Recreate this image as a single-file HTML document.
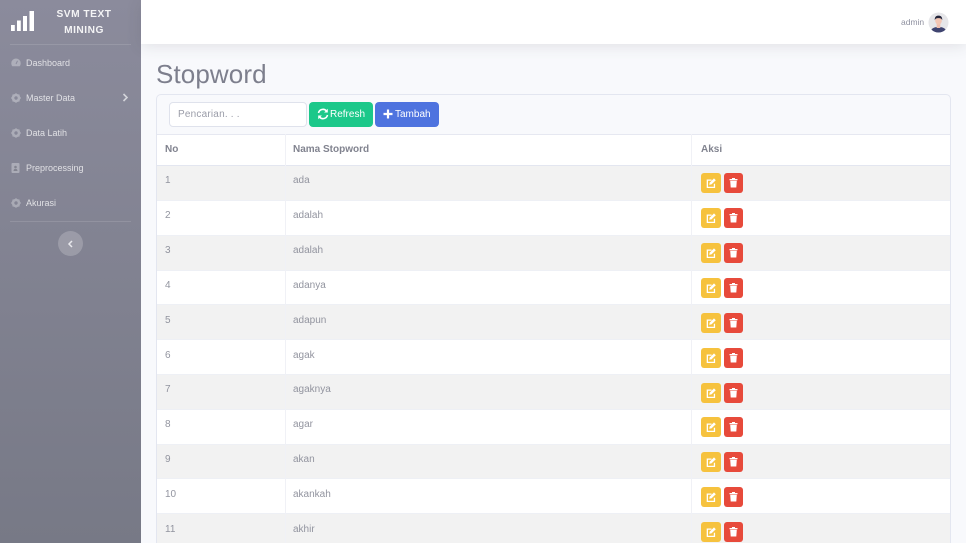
<!DOCTYPE html>
<html lang="id">
<head>
<meta charset="utf-8">
<title>Stopword</title>
<style>
*{box-sizing:border-box}
html,body{margin:0;padding:0;width:966px;height:543px;overflow:hidden;background:#f8f9fc;font-family:"Liberation Sans",sans-serif;color:#858796}
#wrap{position:relative;width:966px;height:543px;overflow:hidden;background:#f8f9fc}
.abs{position:absolute;white-space:nowrap}
#side{position:absolute;left:0;top:0;width:141px;height:543px;background:linear-gradient(180deg,#8b8b9c 0%,#777986 100%)}
#side .hr{position:absolute;left:10px;width:121px;height:1px;background:rgba(255,255,255,.12)}
#side .item{position:absolute;left:26px;font-size:9px;line-height:12px;color:rgba(255,255,255,.75);white-space:nowrap}
#side svg{position:absolute}
#brand{position:absolute;left:42px;width:84px;top:7px;text-align:center;color:rgba(255,255,255,.9);font-weight:bold;font-size:10.200px;line-height:15.500px;letter-spacing:.5px}
#top{position:absolute;left:141px;top:0;width:825px;height:44px;background:#fff;box-shadow:0 2px 14px rgba(58,59,69,.13)}
h1{position:absolute;left:156px;top:58px;margin:0;font-size:26px;line-height:32px;font-weight:400;color:#7d7f8d;letter-spacing:.1px}
#card{position:absolute;left:156px;top:94px;width:795px;height:449px;background:#f8f9fc;border:1px solid #e3e6f0;border-bottom:0;border-radius:5px 5px 0 0}
#search{position:absolute;left:169px;top:102px;width:138px;height:25px;background:#fff;border:1px solid #dfe2ec;border-radius:4px;font-size:10px;line-height:24px;padding-left:8px;color:#9a9ca8;letter-spacing:.2px}
.btn{position:absolute;top:102px;height:25px;border-radius:4px;color:#fff;font-size:10px;line-height:24px}
.btn span{top:.5px}
.row{position:absolute;left:157px;width:793px;border-bottom:1px solid #eef0f5}
.vl{position:absolute;top:134px;width:1px;height:409px;background:#f0f1f6}
.c{position:absolute;font-size:10px;line-height:12px;color:#92949f;white-space:nowrap}
.h{font-weight:bold;color:#81838f;font-size:10px;top:144px}
.b{position:absolute;width:20px;height:20px;border-radius:3px}
.b svg{position:absolute;left:0;top:0}
.e{left:701px;background:#f6c23e}
.d{left:724px;width:19px;background:#e74a3b}
</style>
</head>
<body>
<div id="wrap">
<div id="side">
  <svg style="left:10px;top:10px" width="26" height="23" viewBox="0 0 26 23">
    <rect x="1" y="15" width="3.800" height="6" fill="#fff"/>
    <rect x="7" y="10.500" width="3.800" height="10.500" fill="#fff"/>
    <rect x="13" y="6" width="4" height="15" fill="#fff"/>
    <rect x="19.500" y="1" width="4.500" height="20" fill="#fff"/>
  </svg>
  <div id="brand">SVM TEXT<br>MINING</div>
  <div class="hr" style="top:44px"></div>

  <svg style="left:11px;top:58px" width="10" height="9" viewBox="0 0 10 9"><path d="M5 .5A4.700 4.700 0 0 0 .3 5.200c0 1.200.4 2.300 1.100 3.100h7.200c.7-.8 1.100-1.900 1.100-3.100A4.700 4.700 0 0 0 5 .5z" fill="#aeafba"/><path d="M5 6 6.500 2.800" stroke="#8b8b9c" stroke-width="1"/></svg>
  <div class="item" style="top:57px">Dashboard</div>

  <svg style="left:11px;top:93px" width="10" height="10" viewBox="0 0 10 10"><circle cx="5" cy="5" r="3" fill="none" stroke="#aeafba" stroke-width="2.600"/><path d="M5 .2v2M5 7.800v2M.2 5h2M7.800 5h2M1.600 1.600 3 3M7 7l1.400 1.400M8.400 1.600 7 3M3 7 1.600 8.400" stroke="#aeafba" stroke-width="1.400"/></svg>
  <div class="item" style="top:92px">Master Data</div>
  <svg style="left:122px;top:93px" width="7" height="9" viewBox="0 0 7 9"><path d="M1.500 1 5 4.500 1.500 8" fill="none" stroke="#d3d4da" stroke-width="1.600"/></svg>

  <svg style="left:11px;top:128px" width="10" height="10" viewBox="0 0 10 10"><circle cx="5" cy="5" r="3" fill="none" stroke="#abacb7" stroke-width="2.600"/><path d="M5 .2v2M5 7.800v2M.2 5h2M7.800 5h2M1.600 1.600 3 3M7 7l1.400 1.400M8.400 1.600 7 3M3 7 1.600 8.400" stroke="#abacb7" stroke-width="1.400"/></svg>
  <div class="item" style="top:127px">Data Latih</div>

  <svg style="left:11px;top:163px" width="9" height="10" viewBox="0 0 9 10"><rect x=".5" width="8" height="10" rx="1" fill="#abacb7"/><circle cx="4.500" cy="4" r="1.300" fill="#82838f"/><path d="M2.500 8c0-1.500 1-2.200 2-2.200s2 .7 2 2.200z" fill="#82838f"/></svg>
  <div class="item" style="top:162px">Preprocessing</div>

  <svg style="left:11px;top:198px" width="10" height="10" viewBox="0 0 10 10"><circle cx="5" cy="5" r="3" fill="none" stroke="#a9aab5" stroke-width="2.600"/><path d="M5 .2v2M5 7.800v2M.2 5h2M7.800 5h2M1.600 1.600 3 3M7 7l1.400 1.400M8.400 1.600 7 3M3 7 1.600 8.400" stroke="#a9aab5" stroke-width="1.400"/></svg>
  <div class="item" style="top:197px">Akurasi</div>

  <div class="hr" style="top:221px"></div>
  <div style="position:absolute;left:58px;top:231px;width:25px;height:25px;border-radius:50%;background:rgba(255,255,255,.2)"></div>
  <svg style="left:67px;top:240px" width="7" height="8" viewBox="0 0 7 8"><path d="M5 1 2 4l3 3" fill="none" stroke="#e8e8ec" stroke-width="1.500"/></svg>
</div>

<div id="top"></div>
<div class="abs" style="left:901px;top:16px;font-size:8.500px;line-height:12px;color:#8f91a0">admin</div>
<svg style="position:absolute;left:928px;top:12px" width="21" height="21" viewBox="0 0 21 21">
  <defs><clipPath id="av"><circle cx="10.500" cy="10.500" r="10"/></clipPath></defs>
  <circle cx="10.500" cy="10.500" r="10" fill="#e6e6e9"/>
  <g clip-path="url(#av)">
    <path d="M2.500 21c.3-4.300 2.800-6 8-6s7.700 1.700 8 6z" fill="#3f4470"/>
    <rect x="8.700" y="11" width="3.600" height="5" fill="#f0bfae"/>
    <ellipse cx="10.500" cy="8.800" rx="3.300" ry="3.800" fill="#f3c6b4"/>
    <path d="M6.800 8.200C6.500 4.800 8.300 3.600 10.500 3.600s4 1.200 3.700 4.600c-.5-1.500-1.400-2.100-3.700-2.100s-3.200.6-3.700 2.100z" fill="#23253a"/>
  </g>
</svg>

<h1>Stopword</h1>
<div id="card"></div>
<div id="search">Pencarian. . .</div>

<div class="btn" style="left:309px;width:64px;background:#1cc88a">
  <svg style="position:absolute;left:8px;top:6px" width="12" height="12" viewBox="0 0 12 12"><path d="M1.500 5A4.600 4.600 0 0 1 9.500 3M10.500 7A4.600 4.600 0 0 1 2.500 9" fill="none" stroke="#fff" stroke-width="1.600"/><path d="M10.800.8v3.700H7.100zM1.200 11.200V7.500h3.700z" fill="#fff"/></svg>
  <span style="position:absolute;left:21px">Refresh</span>
</div>
<div class="btn" style="left:375px;width:64px;background:#4e73df">
  <svg style="position:absolute;left:8px;top:7px" width="10" height="10" viewBox="0 0 10 10"><path d="M5 .5v9M.5 5h9" stroke="#fff" stroke-width="2.200"/></svg>
  <span style="position:absolute;left:20px">Tambah</span>
</div>

<div class="row" style="top:134px;height:32px;background:#fff;border-top:1px solid #e6e8f1;border-bottom:1px solid #e3e6f0"></div>
<div class="row" style="top:166px;height:35px;background:#f2f2f2"></div>
<div class="row" style="top:201px;height:35px;background:#fff"></div>
<div class="row" style="top:236px;height:35px;background:#f2f2f2"></div>
<div class="row" style="top:271px;height:34px;background:#fff"></div>
<div class="row" style="top:305px;height:35px;background:#f2f2f2"></div>
<div class="row" style="top:340px;height:35px;background:#fff"></div>
<div class="row" style="top:375px;height:35px;background:#f2f2f2"></div>
<div class="row" style="top:410px;height:35px;background:#fff"></div>
<div class="row" style="top:445px;height:34px;background:#f2f2f2"></div>
<div class="row" style="top:479px;height:35px;background:#fff"></div>
<div class="row" style="top:514px;height:29px;background:#f2f2f2;border-bottom:0"></div>
<div class="vl" style="left:285px"></div>
<div class="vl" style="left:691px"></div>

<div class="c h" style="left:165px">No</div>
<div class="c h" style="left:293px">Nama Stopword</div>
<div class="c h" style="left:701px">Aksi</div>

<div class="c" style="left:165px;top:175px">1</div><div class="c" style="left:293px;top:175px">ada</div>
<div class="c" style="left:165px;top:210px">2</div><div class="c" style="left:293px;top:210px">adalah</div>
<div class="c" style="left:165px;top:245px">3</div><div class="c" style="left:293px;top:245px">adalah</div>
<div class="c" style="left:165px;top:280px">4</div><div class="c" style="left:293px;top:280px">adanya</div>
<div class="c" style="left:165px;top:315px">5</div><div class="c" style="left:293px;top:315px">adapun</div>
<div class="c" style="left:165px;top:350px">6</div><div class="c" style="left:293px;top:350px">agak</div>
<div class="c" style="left:165px;top:384px">7</div><div class="c" style="left:293px;top:384px">agaknya</div>
<div class="c" style="left:165px;top:419px">8</div><div class="c" style="left:293px;top:419px">agar</div>
<div class="c" style="left:165px;top:454px">9</div><div class="c" style="left:293px;top:454px">akan</div>
<div class="c" style="left:165px;top:489px">10</div><div class="c" style="left:293px;top:489px">akankah</div>
<div class="c" style="left:165px;top:524px">11</div><div class="c" style="left:293px;top:524px">akhir</div>

<svg width="0" height="0" style="position:absolute">
  <defs>
    <g id="ie"><path d="M6 6.500h4.500v1.300H7v5.900h5.800v-3h1.300v4.300H5.700V6.500z" fill="#fff"/><path d="M8.200 11.800l.5-2.200 4.300-4.200 1.800 1.800-4.300 4.200z" fill="#fff"/></g>
    <g id="id"><path d="M5.500 6h8v1.200h-8zM8 5h3v1H8zM6.200 7.800h6.600l-.5 6.700H6.700z" fill="#fff"/></g>
  </defs>
</svg>
<div class="b e" style="top:173px"><svg width="20" height="20"><use href="#ie"/></svg></div><div class="b d" style="top:173px"><svg width="19" height="20"><use href="#id"/></svg></div>
<div class="b e" style="top:208px"><svg width="20" height="20"><use href="#ie"/></svg></div><div class="b d" style="top:208px"><svg width="19" height="20"><use href="#id"/></svg></div>
<div class="b e" style="top:243px"><svg width="20" height="20"><use href="#ie"/></svg></div><div class="b d" style="top:243px"><svg width="19" height="20"><use href="#id"/></svg></div>
<div class="b e" style="top:278px"><svg width="20" height="20"><use href="#ie"/></svg></div><div class="b d" style="top:278px"><svg width="19" height="20"><use href="#id"/></svg></div>
<div class="b e" style="top:313px"><svg width="20" height="20"><use href="#ie"/></svg></div><div class="b d" style="top:313px"><svg width="19" height="20"><use href="#id"/></svg></div>
<div class="b e" style="top:348px"><svg width="20" height="20"><use href="#ie"/></svg></div><div class="b d" style="top:348px"><svg width="19" height="20"><use href="#id"/></svg></div>
<div class="b e" style="top:383px"><svg width="20" height="20"><use href="#ie"/></svg></div><div class="b d" style="top:383px"><svg width="19" height="20"><use href="#id"/></svg></div>
<div class="b e" style="top:417px"><svg width="20" height="20"><use href="#ie"/></svg></div><div class="b d" style="top:417px"><svg width="19" height="20"><use href="#id"/></svg></div>
<div class="b e" style="top:452px"><svg width="20" height="20"><use href="#ie"/></svg></div><div class="b d" style="top:452px"><svg width="19" height="20"><use href="#id"/></svg></div>
<div class="b e" style="top:487px"><svg width="20" height="20"><use href="#ie"/></svg></div><div class="b d" style="top:487px"><svg width="19" height="20"><use href="#id"/></svg></div>
<div class="b e" style="top:522px"><svg width="20" height="20"><use href="#ie"/></svg></div><div class="b d" style="top:522px"><svg width="19" height="20"><use href="#id"/></svg></div>
</div>
</body>
</html>
